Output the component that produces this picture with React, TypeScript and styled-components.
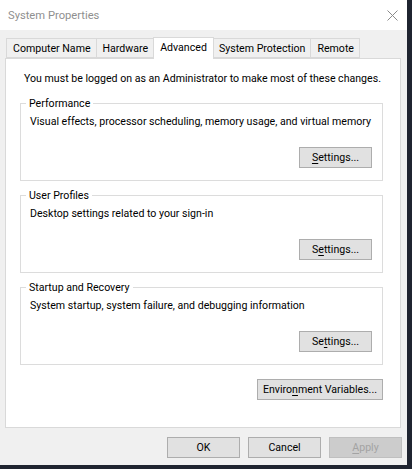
import React from 'react';
import styled, { createGlobalStyle } from 'styled-components';

const GlobalStyle = createGlobalStyle`
  html, body {
    margin: 0;
    padding: 0;
    background: #1f2430;
  }
  body {
    font-family: Roboto, "Noto Sans", "Liberation Sans", sans-serif;
    font-size: 10.6px;
    color: #000;
    white-space: nowrap;
  }
`;

// dialog frame
const Frame = styled.div`
  width: 407px;
  height: 465px;
  background: #f0f0f0;
  display: flex;
  flex-direction: column;
`;

const TitleBar = styled.div`
  height: 30px;
  background: #fff;
  display: flex;
  align-items: center;
  justify-content: space-between;
  padding: 0 9px 0 8px;
  box-sizing: border-box;
`;

const Title = styled.span`
  color: #8f8f8f;
  font-size: 11.2px;
  line-height: 15px;
`;

const CloseIcon = () => (
  <svg width="11" height="11" viewBox="0 0 11 11">
    <path d="M0.5 0.5 L10.5 10.5 M10.5 0.5 L0.5 10.5" stroke="#8a8a8a" strokeWidth="1" />
  </svg>
);

const Body = styled.div`
  flex: 1;
  display: flex;
  flex-direction: column;
  padding: 7px 6px 0 5px;
`;

const TabStrip = styled.div`
  display: flex;
  align-items: flex-end;
  height: 21px;
  padding-left: 1px;
`;

const Tab = styled.div<{ $active?: boolean }>`
  box-sizing: border-box;
  height: ${(p) => (p.$active ? '22px' : '20px')};
  margin-bottom: ${(p) => (p.$active ? '-1px' : '0')};
  padding: ${(p) => (p.$active ? '2px 6px 0' : '0 5px 0 6px')};
  margin-left: -1px;
  margin-right: ${(p) => (p.$active ? '-1px' : '0')};
  border: 1px solid #d9d9d9;
  border-bottom: ${(p) => (p.$active ? 'none' : '1px solid #d9d9d9')};
  background: ${(p) => (p.$active ? '#fff' : '#f0f0f0')};
  display: flex;
  align-items: ${(p) => (p.$active ? 'flex-start' : 'center')};
  line-height: 15px;
  position: relative;
  z-index: ${(p) => (p.$active ? 2 : 1)};
  &:first-child {
    margin-left: 0;
  }
`;

const Panel = styled.div`
  box-sizing: border-box;
  height: 370px;
  background: #fff;
  border: 1px solid #d9d9d9;
  padding: 12px 17px 0 14px;
  display: flex;
  flex-direction: column;
`;

const Notice = styled.div`
  line-height: 15px;
  margin-left: 4px;
  margin-bottom: 10px;
`;

const Groups = styled.div`
  display: flex;
  flex-direction: column;
  gap: 7px;
`;

const Group = styled.fieldset`
  margin: 0;
  padding: 0 10px 12px 9px;
  border: 1px solid #dcdcdc;
  min-width: 0;
`;

const Legend = styled.legend`
  padding: 0 3px;
  margin-left: -4px;
  line-height: 15px;
`;

const Desc = styled.div`
  line-height: 15px;
  margin-top: 3px;
  margin-left: 0;
`;

const ButtonRow = styled.div<{ $top?: number }>`
  display: flex;
  justify-content: flex-end;
  gap: 8px;
  margin-top: ${(p) => p.$top ?? 0}px;
`;

const Button = styled.button<{ $w?: number }>`
  box-sizing: border-box;
  width: ${(p) => p.$w ?? 73}px;
  height: 21px;
  padding: 0;
  border: 1px solid #adadad;
  background: #e1e1e1;
  color: #000;
  font-family: inherit;
  font-size: inherit;
  line-height: 15px;
  white-space: nowrap;
  &:disabled {
    background: #cccccc;
    border-color: #bfbfbf;
    color: #a3a3a3;
  }
`;

const Key = styled.span`
  text-decoration: underline;
  text-underline-offset: 2px;
`;

const Footer = styled.div`
  display: flex;
  justify-content: flex-end;
  gap: 8px;
  margin-top: 9px;
  margin-right: -1px;
`;

const tabs = ['Computer Name', 'Hardware', 'Advanced', 'System Protection', 'Remote'];

const groups = [
  {
    title: 'Performance',
    desc: 'Visual effects, processor scheduling, memory usage, and virtual memory',
    key: 0,
  },
  { title: 'User Profiles', desc: 'Desktop settings related to your sign-in', key: 1 },
  {
    title: 'Startup and Recovery',
    desc: 'System startup, system failure, and debugging information',
    key: 2,
  },
];

const Settings = ({ k }: { k: number }) => {
  const word = 'Settings...';
  return (
    <>
      {word.slice(0, k)}
      <Key>{word[k]}</Key>
      {word.slice(k + 1)}
    </>
  );
};

const App = () => {
  return (
    <>
      <GlobalStyle />
      <Frame>
        <TitleBar>
          <Title>System Properties</Title>
          <CloseIcon />
        </TitleBar>
        <Body>
          <TabStrip>
            {tabs.map((t) => (
              <Tab key={t} $active={t === 'Advanced'}>
                {t}
              </Tab>
            ))}
          </TabStrip>
          <Panel>
            <Notice>You must be logged on as an Administrator to make most of these changes.</Notice>
            <Groups>
              {groups.map((g) => (
                <Group key={g.title}>
                  <Legend>{g.title}</Legend>
                  <Desc>{g.desc}</Desc>
                  <ButtonRow $top={18}>
                    <Button>
                      <Settings k={g.key} />
                    </Button>
                  </ButtonRow>
                </Group>
              ))}
            </Groups>
            <ButtonRow $top={14}>
              <Button $w={126}>
                Enviro<Key>n</Key>ment Variables...
              </Button>
            </ButtonRow>
          </Panel>
          <Footer>
            <Button>OK</Button>
            <Button>Cancel</Button>
            <Button disabled>
              <Key>A</Key>pply
            </Button>
          </Footer>
        </Body>
      </Frame>
    </>
  );
};

export default App;
